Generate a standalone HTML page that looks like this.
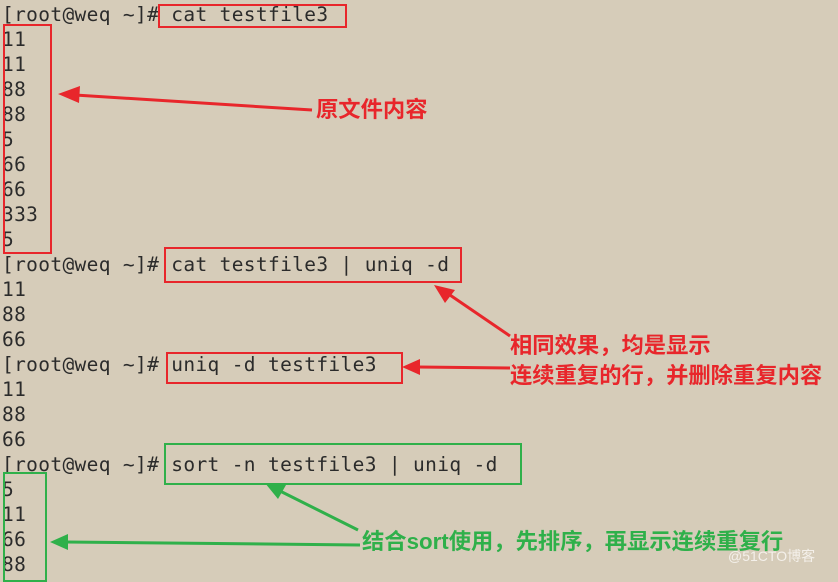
<!DOCTYPE html>
<html><head><meta charset="utf-8"><style>
body{margin:0;width:838px;height:575px;background:#d6ccb9;overflow:hidden;position:relative}
pre{position:absolute;left:2px;top:2px;margin:0;font-family:"DejaVu Sans Mono","Liberation Mono",monospace;font-size:19.5px;line-height:25px;color:#2b2b2b;letter-spacing:0.35px}
.b{position:absolute;border:2px solid #e8262b;box-sizing:border-box}
.g{border-color:#2fb04a}
.t{position:absolute;font-family:"Liberation Sans","Noto Sans CJK SC",sans-serif;font-weight:bold;font-size:22.3px;line-height:24px;white-space:nowrap}
.r{color:#e8262b}.gr{color:#2fb04a}
</style></head><body>
<pre>[root@weq ~]# cat testfile3
11
11
88
88
5
66
66
333
5
[root@weq ~]# cat testfile3 | uniq -d
11
88
66
[root@weq ~]# uniq -d testfile3
11
88
66
[root@weq ~]# sort -n testfile3 | uniq -d
5
11
66
88</pre>
<div class="b" style="left:158px;top:4px;width:189px;height:24px"></div>
<div class="b" style="left:3px;top:24px;width:49px;height:230px"></div>
<div class="b" style="left:164px;top:247px;width:298px;height:36px"></div>
<div class="b" style="left:166px;top:352px;width:237px;height:32px"></div>
<div class="b g" style="left:164px;top:443px;width:358px;height:42px"></div>
<div class="b g" style="left:3px;top:472px;width:44px;height:110px"></div>
<svg width="838" height="575" style="position:absolute;left:0;top:0">
<g stroke="#e8262b" stroke-width="3" fill="#e8262b">
<line x1="312" y1="110" x2="75" y2="95"/><polygon points="58,94 80,86 79,103" stroke="none"/>
<line x1="510" y1="336" x2="447" y2="293"/><polygon points="434,285 455,290 445,303" stroke="none"/>
<line x1="510" y1="368" x2="418" y2="367"/><polygon points="402,367 420,359 420,375" stroke="none"/>
</g>
<g stroke="#2fb04a" stroke-width="3" fill="#2fb04a">
<line x1="358" y1="530" x2="278" y2="490"/><polygon points="265,483 286,485 278,499" stroke="none"/>
<line x1="360" y1="545" x2="66" y2="542"/><polygon points="50,542 68,534 68,550" stroke="none"/>
</g></svg>
<div class="t r" style="left:316px;top:98px">原文件内容</div>
<div class="t r" style="left:510px;top:334px">相同效果，均是显示</div>
<div class="t r" style="left:510px;top:364px">连续重复的行，并删除重复内容</div>
<div class="t gr" style="left:362px;top:530px">结合sort使用，先排序，再显示连续重复行</div>
<div style="position:absolute;left:728px;top:546px;font:14px 'Liberation Sans','Noto Sans CJK SC',sans-serif;color:#f4f0ea">@51CTO博客</div>
</body></html>
